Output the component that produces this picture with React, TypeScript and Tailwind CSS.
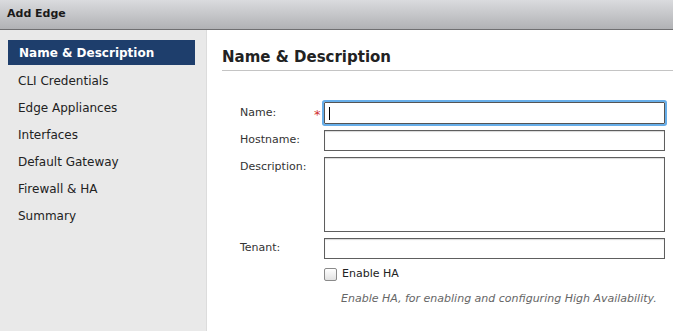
import React from "react";

const items = [
  "Name & Description",
  "CLI Credentials",
  "Edge Appliances",
  "Interfaces",
  "Default Gateway",
  "Firewall & HA",
  "Summary",
];

export default function App() {
  return (
    <div
      className="w-[673px] h-[331px] flex flex-col overflow-hidden bg-white text-[#222]"
      style={{ fontFamily: '"DejaVu Sans", Verdana, sans-serif' }}
    >
      <div className="h-[30px] shrink-0 flex items-center pl-[7px] bg-gradient-to-b from-[#dadbde] to-[#b1b2b5] border-b border-[#6f6f71]">
        <span className="text-[11px] font-bold text-[#1a1a1a]">Add Edge</span>
      </div>
      <div className="flex flex-1 min-h-0">
        <div className="w-[207px] shrink-0 bg-[#e9e9e9] pt-[10px] pl-[8px] pr-[11px] border-r border-[#dcdcdc]">
          {items.map((it, i) => (
            <div
              key={it}
              className={
                i === 0
                  ? "h-[25px] mb-[2px] flex items-center pl-[11px] bg-[#1e3e6c] text-white font-bold text-[12px]"
                  : "h-[27px] flex items-center pl-[10px] text-[12px] text-[#222]"
              }
            >
              {it}
            </div>
          ))}
        </div>
        <div className="flex-1 pl-[15px] pt-[17px]">
          <div className="text-[15px] font-bold text-[#222] pb-[3px] border-b border-[#c4c4c4] leading-[20px]">
            Name &amp; Description
          </div>
          <div className="pl-[18px] pt-[31px] pr-[8px] text-[11px] text-[#333]">
            <div className="flex items-center h-[22px]">
              <div className="w-[74px]">Name:</div>
              <div className="w-[10px] text-[#d03030] text-[13px] leading-none pt-[3px]">*</div>
              <div className="flex-1 h-[22px] border border-[#555] rounded-[1px] flex items-center pl-[4px] shadow-[0_0_0_2px_#67aee9]">
                <div className="w-px h-[13px] bg-black" />
              </div>
            </div>
            <div className="flex items-center h-[21px] mt-[6px]">
              <div className="w-[84px]">Hostname:</div>
              <div className="flex-1 h-[21px] border border-[#5e5e5e] shadow-[inset_0_1px_1px_#d8d8d8]" />
            </div>
            <div className="flex items-start mt-[6px]">
              <div className="w-[84px] pt-[2px]">Description:</div>
              <div className="flex-1 h-[75px] border border-[#5e5e5e] shadow-[inset_0_1px_1px_#d8d8d8]" />
            </div>
            <div className="flex items-center h-[21px] mt-[6px]">
              <div className="w-[84px]">Tenant:</div>
              <div className="flex-1 h-[21px] border border-[#5e5e5e] shadow-[inset_0_1px_1px_#d8d8d8]" />
            </div>
            <div className="flex items-center h-[13px] mt-[9px] pl-[84px]">
              <div className="w-[13px] h-[13px] border border-[#8a8a8a] rounded-[2px] bg-gradient-to-b from-white to-[#e2e2e2]" />
              <span className="ml-[5px] text-[11px] text-[#222]">Enable HA</span>
            </div>
            <div className="pl-[101px] mt-[10px] text-[11px] italic text-[#666] whitespace-nowrap">
              Enable HA, for enabling and configuring High Availability.
            </div>
          </div>
        </div>
      </div>
    </div>
  );
}
